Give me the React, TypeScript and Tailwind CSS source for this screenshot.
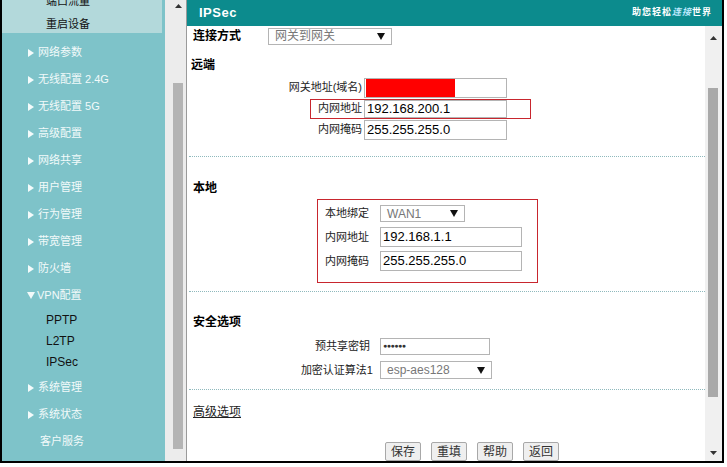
import React from 'react';

// Router admin page: VPN > IPSec settings

const FONT = "font-['Liberation_Sans','Noto_Sans_CJK_SC',sans-serif]";

const menu = [
  '网络参数',
  '无线配置 2.4G',
  '无线配置 5G',
  '高级配置',
  '网络共享',
  '用户管理',
  '行为管理',
  '带宽管理',
  '防火墙',
];

function RightTri() {
  return (
    <svg width="6" height="8" viewBox="0 0 6 8" className="shrink-0">
      <polygon points="0,0 6,4 0,8" fill="#f4fbfb" />
    </svg>
  );
}

function DownTri({ color = '#111' }: { color?: string }) {
  return (
    <svg width="8" height="7" viewBox="0 0 8 7" className="shrink-0">
      <polygon points="0,0 8,0 4,7" fill={color} />
    </svg>
  );
}

function UpArrow() {
  return (
    <svg width="7" height="4" viewBox="0 0 7 4">
      <polygon points="0,4 7,4 3.5,0" fill="#333" />
    </svg>
  );
}

function DownArrow() {
  return (
    <svg width="7" height="4" viewBox="0 0 7 4">
      <polygon points="0,0 7,0 3.5,4" fill="#333" />
    </svg>
  );
}

function Sidebar() {
  return (
    <div className="flex w-[163px] shrink-0 flex-col bg-[#7ec3c9]">
      <div className="mr-[3px] h-[33px] overflow-hidden bg-[#b3d9db] text-[11px] text-[#111]">
        <div className="mt-[-10px] flex h-[22px] items-center pl-[44px]">端口流量</div>
        <div className="flex h-[24px] items-center pl-[44px]">重启设备</div>
      </div>
      <div className="pt-[6px] text-[11px] text-[#f2fafa]">
        {menu.map((m) => (
          <div key={m} className="flex h-[27px] items-center gap-[4px] pl-[26px]">
            <RightTri />
            <span>{m}</span>
          </div>
        ))}
        <div className="flex h-[27px] items-center gap-[2px] pl-[25px]">
          <DownTri color="#f2fafa" />
          <span>VPN配置</span>
        </div>
        <div className="pb-[2px] text-[12px] text-[#111]">
          {['PPTP', 'L2TP', 'IPSec'].map((s) => (
            <div key={s} className="flex h-[21px] items-center pl-[44px]">
              {s}
            </div>
          ))}
        </div>
        {['系统管理', '系统状态'].map((m) => (
          <div key={m} className="flex h-[27px] items-center gap-[4px] pl-[26px]">
            <RightTri />
            <span>{m}</span>
          </div>
        ))}
        <div className="flex h-[27px] items-center pl-[38px]">客户服务</div>
      </div>
    </div>
  );
}

function LeftTrack() {
  return (
    <div className="flex w-[21px] shrink-0 flex-col bg-[#ececec]">
      <div className="flex h-[12px] items-center pl-[10px]">
        <UpArrow />
      </div>
      <div className="ml-[8px] mt-[71px] h-[366px] w-[10px] bg-[#b4b4b4]" />
    </div>
  );
}

function Input({
  value,
  w,
  h = 'h-[20px]',
  children,
}: {
  value?: string;
  w: string;
  h?: string;
  children?: React.ReactNode;
}) {
  return (
    <div
      className={`${w} ${h} flex items-center border border-[#b4b4b4] bg-white pl-[2px] text-[13px] text-black`}
    >
      {children ?? value}
    </div>
  );
}

function Select({ value, w, h }: { value: string; w: string; h: string }) {
  return (
    <div
      className={`${w} ${h} flex items-center justify-between border border-[#b4b4b4] bg-white pl-[6px] pr-[6px] text-[12px] text-[#777]`}
    >
      <span>{value}</span>
      <DownTri />
    </div>
  );
}

function Dotted() {
  return <div className="ml-[2px] border-t border-dotted border-[#8fb9bd]" />;
}

function MainForm() {
  return (
    <div className="w-[518px] shrink-0 text-[11px] text-[#222]">
      {/* 连接方式 */}
      <div className="flex h-[20px] items-center pl-[6px]">
        <div className="w-[75px] text-[12px] font-bold text-black">连接方式</div>
        <Select value="网关到网关" w="w-[124px]" h="h-[17px]" />
      </div>

      {/* 远端 */}
      <div className="mt-[11px] h-[16px] pl-[4px] text-[12px] font-bold leading-[16px] text-black">
        远端
      </div>
      <div className="mt-[4px]">
        <div className="flex h-[21px] items-center">
          <div className="w-[175px] text-right">网关地址(域名)</div>
          <div className="ml-[2px]">
            <Input w="w-[143px]">
              <div className="ml-[-1px] h-[18px] w-[89px] bg-[#ff0000]" />
            </Input>
          </div>
        </div>
        <div className="flex h-[21px] items-center">
          <div className="ml-[123px] flex h-[20px] w-[221px] items-center border border-[#c8262e]">
            <div className="w-[51px] text-right">内网地址</div>
            <div className="ml-[2px]">
              <Input value="192.168.200.1" w="w-[143px]" h="h-[18px]" />
            </div>
          </div>
        </div>
        <div className="flex h-[21px] items-center">
          <div className="w-[175px] text-right">内网掩码</div>
          <div className="ml-[2px]">
            <Input value="255.255.255.0" w="w-[143px]" />
          </div>
        </div>
      </div>
      <div className="mt-[16px]">
        <Dotted />
      </div>

      {/* 本地 */}
      <div className="mt-[23px] h-[16px] pl-[6px] text-[12px] font-bold leading-[16px] text-black">
        本地
      </div>
      <div className="ml-[130px] mt-[3px] h-[84px] w-[221px] border border-[#c8262e] pl-[7px] pt-[5px]">
        <div className="flex h-[17px] items-center">
          <div className="w-[55px]">本地绑定</div>
          <Select value="WAN1" w="w-[85px]" h="h-[17px]" />
        </div>
        <div className="mt-[5px] flex h-[20px] items-center">
          <div className="w-[55px]">内网地址</div>
          <Input value="192.168.1.1" w="w-[142px]" />
        </div>
        <div className="mt-[4px] flex h-[20px] items-center">
          <div className="w-[55px]">内网掩码</div>
          <Input value="255.255.255.0" w="w-[142px]" />
        </div>
      </div>
      <div className="mt-[8px]">
        <Dotted />
      </div>

      {/* 安全选项 */}
      <div className="mt-[22px] h-[16px] pl-[6px] text-[12px] font-bold leading-[16px] text-black">
        安全选项
      </div>
      <div className="mt-[8px] flex h-[17px] items-center">
        <div className="w-[183px] text-right">预共享密钥</div>
        <div className="ml-[10px]">
          <Input w="w-[110px]" h="h-[17px]">
            <span className="text-[7px] tracking-[-0.5px] text-[#333]">●●●●●●</span>
          </Input>
        </div>
      </div>
      <div className="mt-[6px] flex h-[18px] items-center">
        <div className="w-[186px] text-right">加密认证算法1</div>
        <div className="ml-[7px]">
          <Select value="esp-aes128" w="w-[112px]" h="h-[18px]" />
        </div>
      </div>
      <div className="mt-[10px]">
        <Dotted />
      </div>

      {/* 高级选项 */}
      <div className="mt-[14px] h-[16px] pl-[6px] text-[12px] leading-[16px] text-[#222] underline">
        高级选项
      </div>
      <div className="ml-[198px] mt-[22px] flex gap-[10px]">
        {['保存', '重填', '帮助', '返回'].map((b) => (
          <div
            key={b}
            className="flex h-[19px] w-[36px] items-center justify-center rounded-[2px] border border-[#a8a8a8] bg-[#efefef] text-[12px] text-[#333]"
          >
            {b}
          </div>
        ))}
      </div>
    </div>
  );
}

function RightTrack() {
  return (
    <div className="flex w-[17px] shrink-0 flex-col bg-[#f0f0f0]">
      <div className="flex h-[14px] items-end justify-center">
        <UpArrow />
      </div>
      <div className="ml-[3px] mt-[48px] h-[309px] w-[10px] bg-[#a9a9a9]" />
      <div className="mt-[54px] flex justify-center">
        <DownArrow />
      </div>
    </div>
  );
}

export default function App(): React.ReactElement {
  return (
    <div className={`h-[467px] w-[727px] overflow-hidden bg-white ${FONT}`}>
      <div className="flex h-[463px] w-[724px] border-b-2 border-l-2 border-r-2 border-black">
        <Sidebar />
        <LeftTrack />
        <div className="flex flex-1 flex-col border-l border-[#9a9a9a] bg-white">
          <div className="flex h-[26px] shrink-0 items-center justify-between bg-[#0c8b8d] pl-[12px] pr-[10px]">
            <span className="text-[13px] font-bold tracking-[0.5px] text-white">IPSec</span>
            <span className="text-[9px] font-bold tracking-[1px] text-white">
              助您轻松<span className="italic text-[#bfeaff]">连接</span>世界
            </span>
          </div>
          <div className="flex flex-1">
            <MainForm />
            <RightTrack />
          </div>
        </div>
      </div>
    </div>
  );
}
